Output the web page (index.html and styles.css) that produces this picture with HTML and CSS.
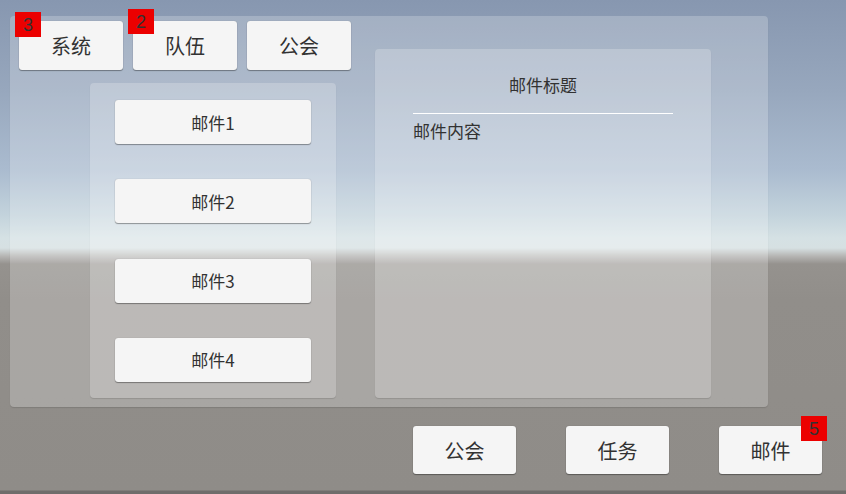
FILE: index.html
```html
<!DOCTYPE html>
<html lang="zh">
<head>
<meta charset="utf-8">
<title>邮件</title>
<link rel="stylesheet" href="styles.css">
</head>
<body>
<div class="main-panel">
  <div class="left-col">
    <div class="tab-row">
      <div class="btn tab">系统<span class="badge badge-sys">3</span></div>
      <div class="btn tab">队伍<span class="badge badge-team">2</span></div>
      <div class="btn tab">公会</div>
    </div>
    <div class="list-panel">
      <div class="btn mail-item">邮件1</div>
      <div class="btn mail-item">邮件2</div>
      <div class="btn mail-item">邮件3</div>
      <div class="btn mail-item">邮件4</div>
    </div>
  </div>
  <div class="detail-panel">
    <div class="detail-title">邮件标题</div>
    <div class="detail-line"></div>
    <div class="detail-body">邮件内容</div>
  </div>
</div>
<div class="bottom-row">
  <div class="btn tab bottom">公会</div>
  <div class="btn tab bottom">任务</div>
  <div class="btn tab bottom">邮件<span class="badge badge-mail">5</span></div>
</div>
</body>
</html>
```
FILE: styles.css
```css
html, body {
  margin: 0;
  padding: 0;
}
body {
  width: 846px;
  height: 494px;
  overflow: hidden;
  font-family: "Noto Sans CJK SC", "Noto Sans", sans-serif;
  color: #323232;
  background: linear-gradient(to bottom,
    #8797b0 0px,
    #97a7bd 90px,
    #aabbcf 170px,
    #c3d3dc 215px,
    #d5e1e4 238px,
    #d6e0e2 248px,
    #b6b6b4 256px,
    #95928e 264px,
    #918e8a 300px,
    #8f8c88 490px,
    #6f6d6b 491px,
    #6f6d6b 494px);
}
.main-panel {
  box-sizing: border-box;
  margin: 16px 0 0 10px;
  width: 758px;
  height: 391px;
  padding: 5px 0 0 9px;
  display: flex;
  align-items: flex-start;
  background: rgba(255, 255, 255, 0.22);
  border-radius: 4px;
  box-shadow: 0 1px 1px rgba(0, 0, 0, 0.12);
}
.left-col {
  width: 332px;
  display: flex;
  flex-direction: column;
}
.tab-row {
  display: flex;
  gap: 10px;
}
.btn {
  position: relative;
  box-sizing: border-box;
  display: flex;
  align-items: center;
  justify-content: center;
  background: #f5f5f5;
  border-radius: 3px;
  box-shadow: 0 1px 1px rgba(0, 0, 0, 0.35), 0 0 1px rgba(0, 0, 0, 0.25);
}
.tab {
  width: 104px;
  height: 49px;
  font-size: 20px;
}
.list-panel {
  box-sizing: border-box;
  margin: 13px 0 0 71px;
  width: 246px;
  height: 315px;
  padding: 17px 0 0 25px;
  display: flex;
  flex-direction: column;
  gap: 35.33px;
  background: rgba(255, 255, 255, 0.22);
  border-radius: 4px;
  box-shadow: 0 1px 1px rgba(0, 0, 0, 0.12);
}
.mail-item {
  width: 196px;
  height: 44px;
  font-size: 17px;
}
.detail-panel {
  box-sizing: border-box;
  margin: 28px 0 0 24px;
  width: 336px;
  height: 349px;
  padding: 26px 38px 0;
  background: rgba(255, 255, 255, 0.22);
  border-radius: 4px;
  box-shadow: 0 1px 1px rgba(0, 0, 0, 0.12);
}
.detail-title {
  text-align: center;
  font-size: 17px;
  line-height: 20px;
}
.detail-line {
  margin-top: 18px;
  height: 1px;
  background: #ffffff;
}
.detail-body {
  margin-top: 7px;
  font-size: 17px;
  line-height: 20px;
}
.bottom-row {
  display: flex;
  gap: 50px;
  margin: 19px 0 0 413px;
}
.bottom {
  width: 103px;
  height: 48px;
}
.badge {
  position: absolute;
  box-sizing: border-box;
  width: 26px;
  height: 25px;
  padding-top: 1px;
  background: #ec0000;
  color: #333333;
  font-family: "Liberation Sans", Arial, sans-serif;
  font-size: 18px;
  line-height: 24px;
  text-align: center;
}
.badge-sys {
  left: -4px;
  top: -9px;
}
.badge-team {
  left: -5px;
  top: -12px;
}
.badge-mail {
  left: 82px;
  top: -10px;
}
```
